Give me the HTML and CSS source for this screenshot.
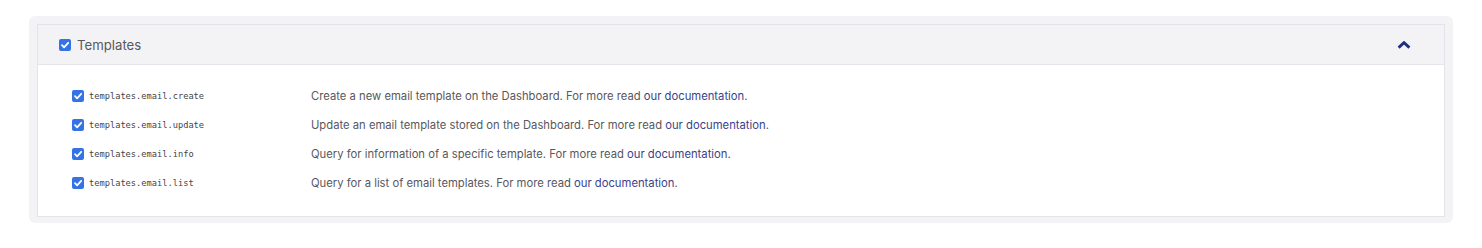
FILE: index.html
```html
<!DOCTYPE html>
<html>
<head>
<meta charset="utf-8">
<link rel="stylesheet" href="styles.css">
</head>
<body>
<div class="page">
  <div class="shell">
    <div class="card">
      <div class="card-head">
        <span class="cb"><svg viewBox="0 0 12 12" width="12" height="12"><path d="M3 6.2l2.1 2.1L9.2 3.8" fill="none" stroke="#fff" stroke-width="1.8" stroke-linecap="round" stroke-linejoin="round"/></svg></span>
        <span class="head-title">Templates</span>
        <svg class="chev" viewBox="0 0 14 8" width="14" height="8"><path d="M1.6 6.6L7 1.6l5.4 5" fill="none" stroke="#1f2e7f" stroke-width="2.8" stroke-linejoin="miter"/></svg>
      </div>
      <div class="card-body">
        <div class="row">
          <div class="scope"><span class="cb"><svg viewBox="0 0 12 12" width="12" height="12"><path d="M3 6.2l2.1 2.1L9.2 3.8" fill="none" stroke="#fff" stroke-width="1.8" stroke-linecap="round" stroke-linejoin="round"/></svg></span><code>templates.email.create</code></div>
          <div class="desc">Create a new email template on the Dashboard. For more read <a href="#">our documentation</a>.</div>
        </div>
        <div class="row">
          <div class="scope"><span class="cb"><svg viewBox="0 0 12 12" width="12" height="12"><path d="M3 6.2l2.1 2.1L9.2 3.8" fill="none" stroke="#fff" stroke-width="1.8" stroke-linecap="round" stroke-linejoin="round"/></svg></span><code>templates.email.update</code></div>
          <div class="desc">Update an email template stored on the Dashboard. For more read <a href="#">our documentation</a>.</div>
        </div>
        <div class="row">
          <div class="scope"><span class="cb"><svg viewBox="0 0 12 12" width="12" height="12"><path d="M3 6.2l2.1 2.1L9.2 3.8" fill="none" stroke="#fff" stroke-width="1.8" stroke-linecap="round" stroke-linejoin="round"/></svg></span><code>templates.email.info</code></div>
          <div class="desc">Query for information of a specific template. For more read <a href="#">our documentation</a>.</div>
        </div>
        <div class="row">
          <div class="scope"><span class="cb"><svg viewBox="0 0 12 12" width="12" height="12"><path d="M3 6.2l2.1 2.1L9.2 3.8" fill="none" stroke="#fff" stroke-width="1.8" stroke-linecap="round" stroke-linejoin="round"/></svg></span><code>templates.email.list</code></div>
          <div class="desc">Query for a list of email templates. For more read <a href="#">our documentation</a>.</div>
        </div>
      </div>
    </div>
  </div>
</div>
</body>
</html>
```

FILE: styles.css
```css
html, body {
  margin: 0;
  padding: 0;
  background: #ffffff;
}
body {
  font-family: "Inter", "Liberation Sans", sans-serif;
  color: #58585d;
}
.page {
  padding: 16px 0 0 29px;
  width: 1424px;
}
.shell {
  background: #f3f3f6;
  border-radius: 6px;
  padding: 8px 8px 6px 8px;
}
.card {
  background: #ffffff;
  border: 1px solid #e3e3e9;
}
.card-head {
  display: flex;
  align-items: center;
  height: 39px;
  padding: 0 33px 0 21px;
  background: #f3f3f6;
  border-bottom: 1px solid #e5e5eb;
}
.cb {
  display: inline-flex;
  width: 12px;
  height: 12px;
  border-radius: 2px;
  background: #3373e6;
  flex: none;
}
.head-title {
  margin-left: 6px;
  font-size: 13.2px;
  color: #58585d;
}
.chev {
  margin-left: auto;
}
.card-body {
  padding: 16px 0 19px 34px;
}
.row {
  display: flex;
  align-items: center;
  height: 29px;
}
.scope {
  display: flex;
  align-items: center;
  width: 239px;
  flex: none;
}
.scope code {
  margin-left: 5px;
  font-family: "DejaVu Sans Mono", monospace;
  font-size: 8.7px;
  color: #444448;
}
.desc {
  font-size: 11.25px;
  color: #58585d;
}
.desc a {
  color: #3a3f8c;
  text-decoration: none;
}
```
